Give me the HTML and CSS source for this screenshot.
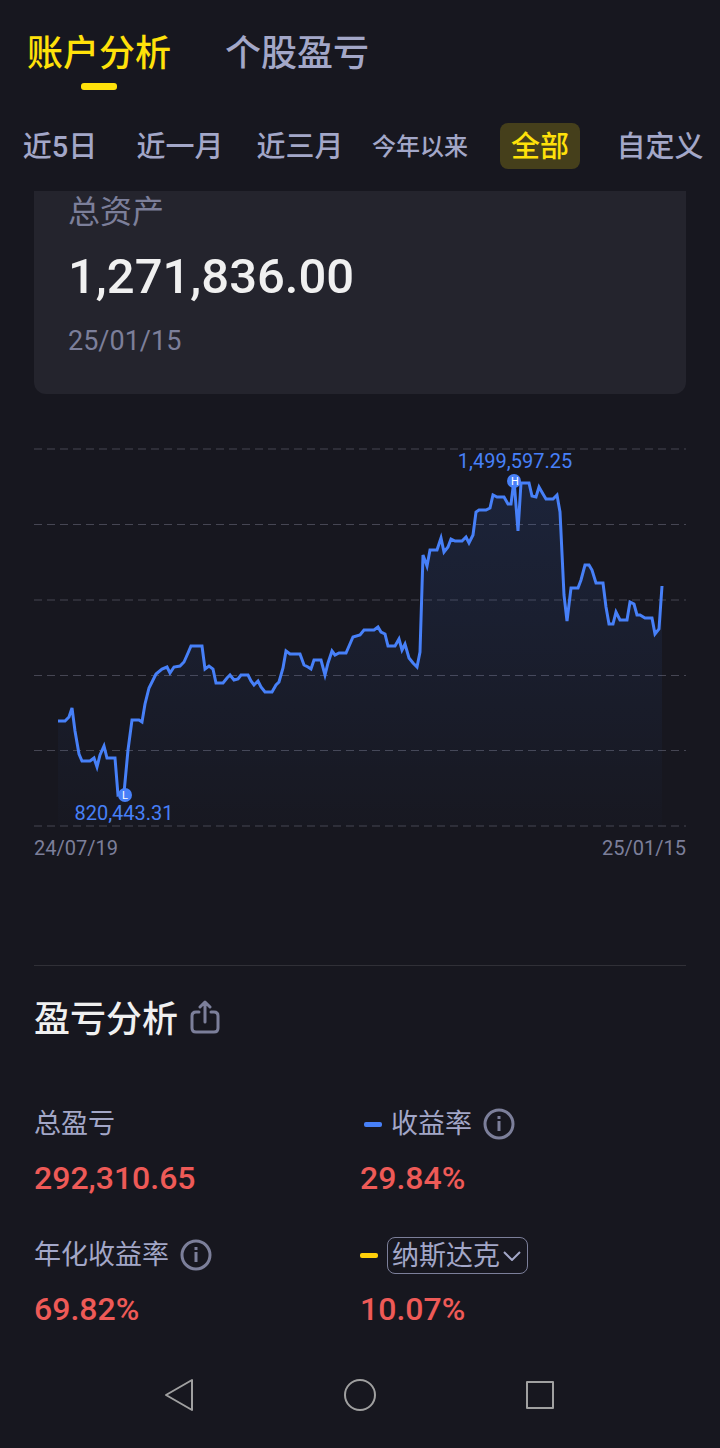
FILE: index.html
```html
<!doctype html>
<html lang="zh-CN">
  <head>
    <meta charset="utf-8">
    <meta name="viewport" content="width=device-width, initial-scale=1">
    <title>账户分析</title>
    <link rel="stylesheet" href="styles.css">
  </head>
  <body>
    <header>
      <nav class="tabs">
        <a href="#account" class="tab active">账户分析</a>
        <a href="#stocks" class="tab">个股盈亏</a>
      </nav>
      <div class="periods">
        <button type="button">近5日</button>
        <button type="button">近一月</button>
        <button type="button">近三月</button>
        <button type="button" class="small">今年以来</button>
        <button type="button" class="active">全部</button>
        <button type="button">自定义</button>
      </div>
    </header>

    <main>
      <section class="card">
        <div class="card-label">总资产</div>
        <div class="card-total">1,271,836.00</div>
        <div class="card-date">25/01/15</div>
      </section>

      <section class="chart">
        <svg viewBox="34 440 652 390" role="img" aria-label="总资产走势">
          <defs>
            <linearGradient id="fill" x1="0" y1="480" x2="0" y2="826" gradientUnits="userSpaceOnUse">
              <stop offset="0" stop-color="#4080ff" stop-opacity="0.12"/>
              <stop offset="1" stop-color="#4080ff" stop-opacity="0.01"/>
            </linearGradient>
          </defs>

          <!-- Grid -->
          <path class="grid" d="M34 449H686M34 524.5H686M34 600H686M34 675.5H686M34 750.5H686M34 826H686"/>

          <!-- Total assets -->
          <path fill="url(#fill)" d="M58 826V721H65L69 717L72 708L75 731L79 754L82 761H90L94 758L97 767L100 755L104 746L107 758H115L118 795L124 793L128 750L132 720H139L142 722L145 704L149 688L156 674L162 669L167 667L170 673L174 667L180 666L184 662L188 653L191 646H202L205 669L209 666L213 669L216 683H223L227 678L230 675L234 680L238 679L241 675H248L251 681L254 685L258 681L261 687L265 692H272L276 685L279 682L283 668L286 651L290 654H300L304 665L308 667L311 669L314 660H321L325 675L328 663L332 651L335 655L339 653H346L353 637L360 635L364 630H374L378 627L381 632L385 634L388 646H395L399 639L402 650L405 644L409 658L413 663L417 667L420 652L423 555L427 566L430 550H437L441 538L444 552L448 547L451 539L455 541H462L466 537L469 543L473 535L476 512L479 510H486L490 508L493 495L497 497H504L508 504H511L514 480L518 531L521 483H529L532 496L536 497L539 487L543 494L546 499H553L557 495L560 512L564 595L567 621L571 588H578L581 580L585 565H589L592 570L596 583H603L606 607L609 624H613L616 612L620 620H627L630 602L634 604L637 615H640L645 618H652L655 634L659 629L662 586V826Z"/>
          <path class="line" d="M58 721H65L69 717L72 708L75 731L79 754L82 761H90L94 758L97 767L100 755L104 746L107 758H115L118 795L124 793L128 750L132 720H139L142 722L145 704L149 688L156 674L162 669L167 667L170 673L174 667L180 666L184 662L188 653L191 646H202L205 669L209 666L213 669L216 683H223L227 678L230 675L234 680L238 679L241 675H248L251 681L254 685L258 681L261 687L265 692H272L276 685L279 682L283 668L286 651L290 654H300L304 665L308 667L311 669L314 660H321L325 675L328 663L332 651L335 655L339 653H346L353 637L360 635L364 630H374L378 627L381 632L385 634L388 646H395L399 639L402 650L405 644L409 658L413 663L417 667L420 652L423 555L427 566L430 550H437L441 538L444 552L448 547L451 539L455 541H462L466 537L469 543L473 535L476 512L479 510H486L490 508L493 495L497 497H504L508 504H511L514 480L518 531L521 483H529L532 496L536 497L539 487L543 494L546 499H553L557 495L560 512L564 595L567 621L571 588H578L581 580L585 565H589L592 570L596 583H603L606 607L609 624H613L616 612L620 620H627L630 602L634 604L637 615H640L645 618H652L655 634L659 629L662 586"/>

          <!-- High / low -->
          <circle class="dot" cx="514" cy="481" r="7"/>
          <text class="mark" x="515" y="485">H</text>
          <text class="peak" x="515" y="468">1,499,597.25</text>
          <circle class="dot" cx="125" cy="795" r="7"/>
          <text class="mark" x="125" y="799">L</text>
          <text class="peak" x="124" y="820">820,443.31</text>
        </svg>
        <div class="axis">
          <span>24/07/19</span>
          <span>25/01/15</span>
        </div>
      </section>

      <section class="analysis">
        <div class="title-row">
          <h2>盈亏分析</h2>
          <button type="button" class="icon-btn" aria-label="分享">
            <svg width="30" height="36" viewBox="0 0 30 36">
              <path d="M9 10H6Q2 10 2 14V26Q2 30 6 30H24Q28 30 28 26V14Q28 10 24 10H21M15 20V1M10 5L15 0L20 5"/>
            </svg>
          </button>
        </div>

        <div class="stats">
          <div class="stat">
            <div class="stat-label">总盈亏</div>
            <div class="stat-value">292,310.65</div>
          </div>
          <div class="stat">
            <div class="stat-label rate">
              <span class="key blue"></span>
              <span>收益率</span>
              <button type="button" class="icon-btn info" aria-label="收益率说明">
                <svg width="32" height="32" viewBox="0 0 32 32">
                  <circle cx="16" cy="16" r="14"/>
                  <path d="M16 8V11M16 13V23"/>
                </svg>
              </button>
            </div>
            <div class="stat-value">29.84%</div>
          </div>
          <div class="stat">
            <div class="stat-label">
              <span>年化收益率</span>
              <button type="button" class="icon-btn info" aria-label="年化收益率说明">
                <svg width="32" height="32" viewBox="0 0 32 32">
                  <circle cx="16" cy="16" r="14"/>
                  <path d="M16 8V11M16 13V23"/>
                </svg>
              </button>
            </div>
            <div class="stat-value">69.82%</div>
          </div>
          <div class="stat">
            <div class="stat-label">
              <span class="key yellow"></span>
              <div class="select">
                <select aria-label="对比指数">
                  <option>纳斯达克</option>
                </select>
                <svg width="18" height="10" viewBox="0 0 18 10">
                  <path d="M1 1L9 9L17 1"/>
                </svg>
              </div>
            </div>
            <div class="stat-value">10.07%</div>
          </div>
        </div>
      </section>
    </main>

    <footer class="system-nav">
      <button type="button" aria-label="返回">
        <svg width="34" height="34" viewBox="0 0 34 34"><path d="M29 2V32L3 17Z"/></svg>
      </button>
      <button type="button" aria-label="主页">
        <svg width="34" height="34" viewBox="0 0 34 34"><circle cx="17" cy="17" r="15"/></svg>
      </button>
      <button type="button" aria-label="最近任务">
        <svg width="34" height="34" viewBox="0 0 34 34"><rect x="4" y="4" width="26" height="26"/></svg>
      </button>
    </footer>
  </body>
</html>
```

FILE: styles.css
```css
:root {
  --bg: #17171f;
  --card: #24242d;
  --text: #f0f0f0;
  --label: #a3a7c8;
  --muted: #7c7f9a;
  --yellow: #ffe10a;
  --blue: #4780f8;
  --red: #ee5a57;
}

* {
  box-sizing: border-box;
}

body {
  margin: 0;
  font-family: Roboto, "Noto Sans CJK SC", sans-serif;
  color: var(--text);
  background: var(--bg);
}

button {
  padding: 0;
  border: none;
  background: none;
  font: inherit;
  color: inherit;
  cursor: pointer;
}

svg {
  display: block;
  fill: none;
}

/* Header */
.tabs {
  display: flex;
  gap: 54px;
  padding: 27px 27px 0;
}

.tab {
  height: 63px;
  font-size: 36px;
  font-weight: 500;
  line-height: 54px;
  color: var(--label);
  text-decoration: none;
}

.tab.active {
  color: var(--yellow);
}

.tab.active::after {
  content: "";
  display: block;
  width: 36px;
  height: 7px;
  margin: 2px auto 0;
  border-radius: 3px;
  background: var(--yellow);
}

.periods {
  display: grid;
  grid-template-columns: repeat(6, 1fr);
  justify-items: center;
  margin: 33px 0 22px;
}

.periods button {
  height: 46px;
  padding-top: 2px;
  font-size: 29px;
  font-weight: 500;
  line-height: 44px;
  white-space: nowrap;
  color: var(--label);
}

.periods .small {
  font-size: 24px;
}

.periods .active {
  padding: 2px 11px 0;
  border-radius: 8px;
  color: var(--yellow);
  background: #453f1b;
}

main {
  padding: 0 34px;
}

/* Total assets */
.card {
  padding: 0 34px 37px;
  border-radius: 0 0 12px 12px;
  background: var(--card);
}

.card-label {
  font-size: 32px;
  line-height: 42px;
  color: var(--muted);
}

.card-total {
  margin: 14px 0 18px;
  font-size: 49px;
  font-weight: 500;
  line-height: 60px;
}

.card-date {
  font-size: 27px;
  line-height: 32px;
  color: var(--muted);
}

/* Chart */
.chart {
  margin-top: 46px;
}

.chart svg {
  width: 100%;
}

.grid {
  stroke: #464653;
  stroke-dasharray: 8 5;
}

.line {
  stroke: var(--blue);
  stroke-width: 3;
}

.dot {
  fill: var(--blue);
}

.mark {
  font-size: 11px;
  text-anchor: middle;
  fill: #fff;
}

.peak {
  font-size: 20px;
  text-anchor: middle;
  fill: var(--blue);
}

.axis {
  display: flex;
  justify-content: space-between;
  margin-top: 6px;
  font-size: 20px;
  line-height: 24px;
  color: var(--muted);
}

/* Profit analysis */
.analysis {
  margin-top: 105px;
  padding-top: 28px;
  border-top: 1px solid #303037;
}

.title-row {
  display: flex;
  align-items: center;
  gap: 12px;
}

h2 {
  margin: 0;
  font-size: 36px;
  font-weight: 500;
  line-height: 52px;
}

.icon-btn svg {
  overflow: visible;
  stroke: var(--muted);
  stroke-width: 3;
  stroke-linecap: round;
  stroke-linejoin: round;
}

.stats {
  display: grid;
  grid-template-columns: 1fr 1fr;
  row-gap: 38px;
  margin-top: 59px;
}

.stat-label {
  display: flex;
  align-items: center;
  gap: 9px;
  height: 38px;
  font-size: 27px;
  line-height: 38px;
  color: var(--label);
}

.stat-value {
  margin-top: 15px;
  font-size: 32px;
  font-weight: 500;
  line-height: 40px;
  color: var(--red);
}

.rate {
  padding-left: 4px;
}

.info {
  margin-left: 2px;
}

.info path {
  stroke-linecap: butt;
}

.key {
  width: 18px;
  height: 5px;
  border-radius: 2px;
}

.blue {
  background: var(--blue);
}

.yellow {
  background: #ffd00a;
}

.select {
  position: relative;
}

.select select {
  display: block;
  height: 37px;
  padding: 2px 27px 0 4px;
  border: 1px solid var(--muted);
  border-radius: 8px;
  appearance: none;
  background: none;
  font: inherit;
  line-height: 33px;
  color: var(--label);
}

.select svg {
  position: absolute;
  top: 14px;
  right: 7px;
  pointer-events: none;
  stroke: var(--label);
  stroke-width: 2;
}

/* Android navigation bar */
.system-nav {
  display: grid;
  grid-template-columns: repeat(3, 1fr);
  justify-items: center;
  align-items: center;
  height: 106px;
  margin-top: 13px;
  padding: 0 12.5%;
}

.system-nav svg {
  stroke: #a0a0a0;
  stroke-width: 2;
  stroke-linejoin: round;
}
```
